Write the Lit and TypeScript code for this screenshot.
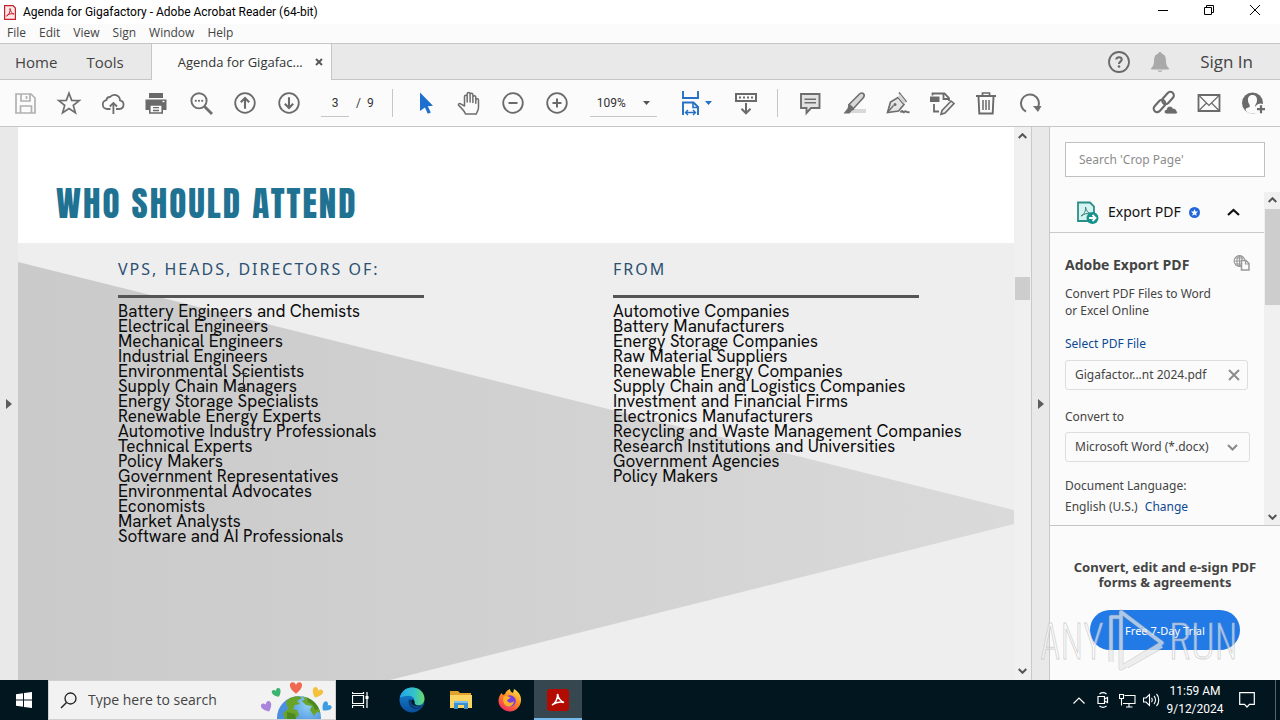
import { LitElement, html, css, svg, nothing } from "lit";
import { customElement, property } from "lit/decorators.js";

const glyphs: Record<string, unknown> = {
  save: svg`<g fill="none" stroke="#b1b1b1" stroke-width="1.7"><path d="M3 3h15l4 4v15H3z"/><path d="M8 3v7h9V3M7.500 22v-7h11v7"/><path d="M13.500 5v3"/></g>`,
  star: svg`<path fill="none" stroke="#6e6e6e" stroke-width="1.7" stroke-linejoin="miter" d="M12 2.200l2.700 7.100 7.600.3-6 4.800 2.100 7.400-6.400-4.300-6.400 4.300 2.100-7.400-6-4.800 7.600-.3z"/>`,
  cloud: svg`<g fill="none" stroke="#6e6e6e" stroke-width="1.800"><path d="M9.500 18H6a4.500 4.500 0 0 1-.6-8.900A3.500 3.500 0 0 1 9 6a5.600 5.600 0 0 1 10 3.300A4.400 4.400 0 0 1 18.500 18h-3.500"/><path d="M12.400 23V12.500M8.800 15.500l3.600-3.600 3.600 3.600"/></g>`,
  print: svg`<path fill="#6a6a6a" d="M4 2h14v5H4zM.5 8.500h21V19H18v-5H4v5H.5z"/><path fill="#fbfbfb" stroke="#6a6a6a" stroke-width="1.6" d="M4.800 14h12.400v8H4.800z"/><path d="M8 16.700h6M8 19.500h6" stroke="#6a6a6a" stroke-width="1.300"/><path d="M17.500 10.500h2" stroke="#fff" stroke-width="1.300"/>`,
  find: svg`<circle cx="10" cy="9.800" r="7.600" fill="none" stroke="#6e6e6e" stroke-width="1.900"/><path d="M15.500 15.500l7.500 7.500" stroke="#6e6e6e" stroke-width="2.800"/><g fill="#6e6e6e"><circle cx="6.800" cy="9.800" r="1.100"/><circle cx="10" cy="9.800" r="1.100"/><circle cx="13.200" cy="9.800" r="1.100"/></g>`,
  up: svg`<g fill="none" stroke="#6a6a6a" stroke-width="1.800"><circle cx="12" cy="12" r="9.800"/><path d="M12 17.800V7M7.800 11.200L12 7l4.200 4.200" stroke-width="2.100"/></g>`,
  down: svg`<g fill="none" stroke="#6a6a6a" stroke-width="1.800"><circle cx="12" cy="12" r="9.800"/><path d="M12 6.200V17M7.800 12.800L12 17l4.200-4.200" stroke-width="2.100"/></g>`,
  pointer: svg`<path fill="#1d6fd0" d="M7 1.500l13 13.200-5.200.6 3 6.200-3 1.300-2.900-6.200L7 20z"/>`,
  hand: svg`<path fill="#fbfbfb" stroke="#6e6e6e" stroke-width="1.500" stroke-linejoin="round" stroke-linecap="round" d="M8.500 23c-1-2.500-3-5-6.800-8.600-.8-.8.300-2.200 1.500-1.700L7.500 15V5.500c0-1.800 2.600-1.800 2.700 0V11 3c0-1.900 2.900-1.900 2.900 0v8V3.500c0-1.700 2.700-1.700 2.800 0V11.500 6c0-1.700 2.800-1.700 2.900 0v6.200V9c.2-1.600 2.700-1.600 2.700.2v7c0 3-1.500 4.500-2.200 6.800z"/>`,
  minus: svg`<g fill="none" stroke="#6a6a6a" stroke-width="1.800"><circle cx="12" cy="12" r="9.800"/><path d="M7.500 12h9" stroke-width="2"/></g>`,
  plus: svg`<g fill="none" stroke="#6a6a6a" stroke-width="1.800"><circle cx="12" cy="12" r="9.800"/><path d="M7.500 12h9M12 7.500v9" stroke-width="2"/></g>`,
  fit: svg`<g fill="none" stroke="#2470c4" stroke-width="1.900"><path d="M4 0v7h15V0M4 24V11.500h10.500L19 16v8"/><path d="M14 11.500V16.500h5" stroke-width="1.600"/><path d="M6.500 21.500h10M9 19l-2.500 2.500L9 24M14 19l2.500 2.500L14 24" stroke-width="1.400"/></g>`,
  ruler: svg`<path fill="#fbfbfb" stroke="#6a6a6a" stroke-width="2" d="M2 3h20v7H2z"/><path d="M5 6.500h14" stroke="#6a6a6a" stroke-width="2.200" stroke-dasharray="2 2"/><path fill="none" stroke="#6a6a6a" stroke-width="2" d="M12 12v10M7.500 17.800L12 22.300l4.500-4.500"/>`,
  comment: svg`<path fill="#e2e2e2" stroke="#6e6e6e" stroke-width="1.900" d="M3 3h18.500v14H13l-4.500 5v-5H3z"/><path d="M6.500 8.300h11.500M6.500 11.700h11.500" stroke="#6e6e6e" stroke-width="1.400"/>`,
  marker: svg`<path fill="#d8d8d8" d="M10 18h14v4H5z"/><path fill="#d8d8d8" stroke="#6e6e6e" stroke-width="1.600" d="M7 13.500L17.500 3c3-2.500 6 .5 4 3.500L11.500 17.500z"/><path fill="#6e6e6e" d="M6.500 13l6 5.500-3 1.500-2 2.500H1.500l4-5z"/>`,
  sign: svg`<g fill="none" stroke="#6e6e6e" stroke-width="1.700"><path fill="#e6e6e6" d="M1.500 21.500L4.500 11l7.500-4.500 6 7L12.500 20z"/><path d="M1.500 21.500l6-7" stroke-width="1.400"/><path d="M13 1.500l7.500 9.500" stroke-width="1.600"/><path d="M14.500 21.500c2.500-4 2.300 1.400 4-.6s1 .8 5 .2" stroke-width="2"/></g><path d="M14 3l6 8-2.500 1.500L12 6z" fill="#d4d4d4"/><circle cx="9" cy="13.500" r="1.500" fill="#6e6e6e"/>`,
  edit: svg`<path fill="#6a6a6a" d="M0 5.500h9.500V11H0z"/><g fill="none" stroke="#6a6a6a" stroke-width="1.800"><path d="M2.500 4.500V2.500h12L19 7v3M4 13v7.500h5"/><path d="M13.500 3v5H19"/><path fill="#ededed" d="M12 19.500l9-9.500 3 2.500-9 9.500-4 1.300z" stroke-width="1.600"/></g>`,
  trash: svg`<g fill="none" stroke="#6a6a6a"><path stroke-width="2" d="M2 5h20"/><path stroke-width="1.700" d="M8.500 4.500V2h7v2.500"/><path stroke-width="1.900" d="M4.500 5.500l.8 17h13.400l.8-17"/><path stroke-width="1.500" d="M9 9v10M12 9v10M15 9v10"/></g>`,
  rotate: svg`<path fill="none" stroke="#6e6e6e" stroke-width="2" d="M8 20.500A9 9 0 1 1 20 16.500"/><path fill="#6e6e6e" d="M15 15h8.500l-3.500 6z"/>`,
  link: svg`<g fill="none" stroke="#6a6a6a" stroke-width="2.100"><rect x="8" y="3.500" width="14" height="7" rx="3.500" transform="rotate(-48 15 7)"/><rect x="-.5" y="11.500" width="14" height="7" rx="3.500" transform="rotate(-48 6.500 15)"/></g><path fill="#6a6a6a" stroke="#fbfbfb" stroke-width=".8" d="M14 23c-3.500 0-3.500-4.200-.5-4.500 0-3.500 5-4.500 6.300-1.300 3 .1 3.700 1.600 3.700 2.700 2 1 .5 3.100-1 3.100z"/>`,
  mail: svg`<g fill="none" stroke="#6a6a6a" stroke-width="1.800"><path d="M1.500 4h21v16h-21z"/><path stroke-width="1.200" d="M1.500 4l8 8M22.500 4L12 14.500 9.500 12M1.500 20l8-8M22.500 20l-8-8"/></g>`,
  user: svg`<circle cx="11.500" cy="12" r="10.500" fill="#6a6a6a"/><path fill="#fbfbfb" d="M11.500 4c3.500 0 4.800 2.500 4.500 5.500-.2 2-.8 3.400-1.700 4.500v2c1.700.8 4 .8 4.200 3.200-1.500 2-4 3.300-7 3.300s-5.500-1.300-7-3.300c.2-2.400 2.500-2.400 4.200-3.200v-2c-.9-1.100-1.500-2.500-1.700-4.500C6.700 6.500 8 4 11.500 4z"/><circle cx="19.500" cy="18" r="5.500" fill="#fbfbfb"/><path d="M20 14.200v8M16 18.200h8" stroke="#6a6a6a" stroke-width="2.200"/>`,
  help: svg`<circle cx="12" cy="12" r="10" fill="none" stroke="#6a6a6a" stroke-width="1.800"/><path fill="none" stroke="#6a6a6a" stroke-width="2.100" d="M9.300 9.500c0-3 5.400-2.900 5.400.1 0 2-2.700 2.100-2.700 4.400"/><circle cx="12" cy="16.500" r="1.300" fill="#6a6a6a"/>`,
  bell: svg`<path fill="#a9a9a9" d="M12 2c1 0 1.600.6 1.600 1.500 3 .8 4.300 3.200 4.300 6.500 0 4.500 1 6.500 2.900 8v1.500H3.200V18c1.900-1.500 2.900-3.500 2.900-8 0-3.300 1.300-5.700 4.300-6.500C10.400 2.600 11 2 12 2zM9.500 20.500h5c-.5 1.800-4.500 1.800-5 0z"/>`,
};

@customElement("tool-icon")
class ToolIcon extends LitElement {
  @property() name = "";
  @property({ type: Number }) size = 24;
  static styles = css`:host { display: inline-flex; } svg { display: block; overflow: visible; }`;
  render() {
    return html`<svg width=${this.size} height=${this.size} viewBox="0 0 24 24" aria-hidden="true">${glyphs[this.name] ?? nothing}</svg>`;
  }
}

const roles = ["Battery Engineers and Chemists", "Electrical Engineers", "Mechanical Engineers", "Industrial Engineers", "Environmental Scientists", "Supply Chain Managers", "Energy Storage Specialists", "Renewable Energy Experts", "Automotive Industry Professionals", "Technical Experts", "Policy Makers", "Government Representatives", "Environmental Advocates", "Economists", "Market Analysts", "Software and AI Professionals"];
const sources = ["Automotive Companies", "Battery Manufacturers", "Energy Storage Companies", "Raw Material Suppliers", "Renewable Energy Companies", "Supply Chain and Logistics Companies", "Investment and Financial Firms", "Electronics Manufacturers", "Recycling and Waste Management Companies", "Research Institutions and Universities", "Government Agencies", "Policy Makers"];

const chevron = (d: string, color = "#555", w = 2) =>
  html`<svg width="9" height="6" viewBox="0 0 9 6" aria-hidden="true"><path d=${d} fill="none" stroke=${color} stroke-width=${w}/></svg>`;
const UP = "M.7 5L4.500 1.200 8.300 5";
const DOWN = "M.7 1L4.500 4.800 8.300 1";

@customElement("app-root")
class AppRoot extends LitElement {
  static styles = css`
    :host { display: block; height: 100vh; overflow: hidden; color: #444; font: 12px/16px "Open Sans", "Noto Sans", sans-serif; }
    * { box-sizing: border-box; }
    button, input, select { font: inherit; color: inherit; border: 0; background: none; padding: 0; margin: 0; border-radius: 0; }
    button { display: inline-flex; align-items: center; justify-content: center; }
    h1, h2, h3, p, ul { margin: 0; padding: 0; font: inherit; }
    ul { list-style: none; }
    a { color: #0d4a94; text-decoration: none; }
    svg { display: block; flex: none; }
    .app { height: 100%; display: flex; flex-direction: column; background: #fbfbfb; position: relative; }
    .grow { flex: 1; }

    .title { height: 24px; flex: none; background: #fff; color: #000; display: flex; align-items: center; font-family: Roboto, sans-serif; padding-right: 2px; }
    .title svg.logo { margin: 0 7px 0 4px; }
    .title .ctl { width: 46px; height: 24px; padding-bottom: 4px; }
    .menu { height: 19px; flex: none; display: flex; align-items: center; gap: 13px; padding: 0 0 2px 7px; }
    .tabs { height: 37px; flex: none; background: #e9e9e9; border-top: 1px solid #c6c6c6; border-bottom: 1px solid #c6c6c6; display: flex; align-items: stretch; font-size: 13px; }
    .tabs .nav { padding: 0 15px; font-size: 15px; }
    .tabs .nav + .nav { padding: 0 27px 0 14px; }
    .tab { width: 181px; background: #fbfbfb; border: solid #c6c6c6; border-width: 0 1px; margin-bottom: -1px; display: flex; align-items: center; justify-content: space-between; padding: 0 8px 0 26px; color: #333; }
    .tabs .ico { width: 41px; }
    .tabs .signin { padding: 0 27px 0 20px; font-size: 17px; }

    .tools { height: 47px; flex: none; border-bottom: 1px solid #c6c6c6; display: flex; align-items: center; padding: 0 5px 0 3px; color: #333; }
    .tools button { width: 44px; height: 40px; flex: none; }
    .tools .wide { width: 50px; }
    .tools .page { width: 28px; height: 27px; margin: 0 7px 0 10px; border-bottom: 1px solid #c6c6c6; text-align: center; font-family: Roboto, sans-serif; }
    .tools .total { font-family: Roboto, sans-serif; white-space: pre; }
    .tools i { width: 1px; height: 28px; background: #c6c6c6; margin: 0 10px 0 6px; }
    .tools i.first { margin-left: 18px; }
    .zoom { position: relative; display: flex; align-items: center; margin: 0 14px 0 11px; }
    .zoom select { appearance: none; width: 67px; height: 27px; border-bottom: 1px solid #c6c6c6; padding-left: 7px; font-family: Roboto, sans-serif; }
    .zoom svg { position: absolute; right: 7px; pointer-events: none; }
    .tools .fit { gap: 2px; }

    .main { flex: 1; min-height: 0; display: flex; background: #e9e9e9; }
    .gut { width: 18px; flex: none; display: flex; align-items: center; justify-content: center; }
    .doc { flex: 1; min-width: 0; display: flex; flex-direction: column; background: #fff; color: #0c0c0c; position: relative; }
    .doc h1 { padding: 50px 38px 12px; font: 35px/54px Anton, "Roboto Condensed", sans-serif; letter-spacing: 2px; color: #1f7292; height: 116px; flex: none; white-space: nowrap; }
    .sheet { flex: 1; min-height: 0; display: grid; background: #eee; overflow: hidden; }
    .sheet > * { grid-area: 1 / 1; min-height: 0; }
    .sheet > svg { width: 100%; height: 100%; }
    .cols { display: grid; grid-template-columns: 5fr 4fr; padding: 14px 5px 0 100px; align-items: start; }
    .cols h2 { font: 16px/24px "Noto Sans", sans-serif; letter-spacing: 2px; color: #2b5070; }
    .cols ul { margin-top: 12px; font: 17px/15px "HK Grotesk", "Hanken Grotesk", Inter, sans-serif; white-space: nowrap; }
    .cols hr { border: 0; height: 3px; width: 306px; max-width: 95%; background: #555; margin: 14px 0 -6px; }
    .ibeam { position: absolute; left: 221px; top: 246px; }
    .bar { width: 17px; flex: none; background: #f0f0f0; display: flex; flex-direction: column; align-items: center; justify-content: space-between; padding: 6px 0; position: relative; }
    .bar .thumb { position: absolute; width: 15px; height: 23px; top: 150px; background: #cdcdcd; }
    .gut.right { border: solid #c9c9c9; border-width: 0 1px; width: 19px; }

    .panel { width: 230px; flex: none; background: #fbfbfb; display: flex; flex-direction: column; font-family: "Noto Sans", sans-serif; }
    .panel .search { margin: 15px; height: 35px; border: 1px solid #c0c0c0; background: #fff; padding: 0 13px; font-size: 12px; }
    .search::placeholder { color: #8c8c8c; opacity: 1; }
    .scroll { height: 334px; flex: none; display: flex; border-bottom: 1px solid #c6c6c6; }
    .content { flex: 1; min-width: 0; }
    .exp { height: 41px; border-bottom: 1px solid #c9c9c9; display: flex; align-items: center; padding: 0 24px 0 26px; color: #111; font-size: 14px; }
    .exp span { margin: 0 8px 0 9px; }
    .body { padding: 22px 14px 0 15px; display: flex; flex-direction: column; align-items: flex-start; }
    .body .head { align-self: stretch; display: flex; justify-content: space-between; font: bold 14px/20px "Open Sans", sans-serif; }
    .body p { line-height: 17px; margin: 10px 0 17px; }
    .file { width: 183px; height: 30px; border: 1px solid #dedede; border-radius: 3px; display: flex; align-items: center; justify-content: space-between; padding: 0 7px 0 9px; margin: 8px 0 19px; white-space: nowrap; }
    .conv { position: relative; margin: 7px 0 16px; display: flex; align-items: center; }
    .conv select { appearance: none; width: 185px; height: 30px; border: 1px solid #dedede; border-radius: 3px; padding-left: 9px; }
    .conv svg { position: absolute; right: 12px; pointer-events: none; }
    .lang { margin-top: 5px; }
    .lang a { margin-left: 4px; }
    .scroll .bar { width: 16px; padding: 5px 0; }
    .scroll .thumb { top: 17px; height: 96px; }
    .promo { flex: 1; display: flex; flex-direction: column; align-items: center; padding: 34px 18px 0; text-align: center; font-size: 13px; font-weight: bold; line-height: 15px; }
    .trial { width: 150px; height: 40px; border-radius: 20px; background: #227ae6; color: #fff; font-size: 11px; font-weight: normal; margin-top: 20px; flex: none; }
    .mark { position: absolute; right: 42px; bottom: 44px; pointer-events: none; }
    .mark text { font: 200 44px Oswald, "Roboto Condensed", sans-serif; }

    .task { height: 40px; flex: none; background: #02161f; display: flex; align-items: stretch; color: #fff; }
    .task button { width: 49px; }
    .task .start { width: 48px; }
    .task .view { width: 51px; padding-right: 2px; }
    .find { width: 288px; background: #f2f2f2; border: 1px solid #d0d0d0; display: flex; align-items: center; padding-left: 11px; }
    .find input { flex: 1; min-width: 0; margin-left: 11px; font-size: 14px; color: #333; }
    .find input::placeholder { color: #444; opacity: 1; }
    .task .on { width: 48px; background: #36474f; border-bottom: 2px solid #76b9ed; padding-top: 2px; }
    .tray { display: flex; align-items: center; }
    .tray button { width: 24px; height: 40px; }
    .clock { width: 64px; text-align: center; line-height: 18px; margin-right: 4px; font-family: Roboto, sans-serif; white-space: nowrap; }
    .tray .note { width: 32px; margin-right: 12px; }
    .peek { width: 5px; align-self: stretch; border-left: 1px solid #58656b; }
  `;

  tool(name: string, label: string) {
    return html`<button aria-label=${label}><tool-icon name=${name}></tool-icon></button>`;
  }

  render() {
    const tri = (c: string) => html`<svg width="7" height="4" viewBox="0 0 7 4" aria-hidden="true"><path d="M0 0h7L3.500 4z" fill=${c}/></svg>`;
    const side = html`<svg width="6" height="10" viewBox="0 0 6 10" aria-hidden="true"><path d="M0 0l6 5-6 5z" fill="#5c5c5c"/></svg>`;
    return html`<div class="app">
      <header class="title">
        <svg class="logo" width="12" height="15" viewBox="0 0 12 15" aria-hidden="true"><path d="M.6.600h8.400l2.400 2.400v11.400H.6z" fill="#fbe9ea" stroke="#c8202a" stroke-width="1.200"/><path d="M2.500 11c2.500-1 4-4.500 3.500-7.500.8 3.500 2 5 4 5.500-2.500-.8-5.500 0-7.500 2z" fill="none" stroke="#c8202a"/></svg>
        <span>Agenda for Gigafactory - Adobe Acrobat Reader (64-bit)</span><span class="grow"></span>
        <button class="ctl" aria-label="Minimize"><svg width="10" height="10"><path d="M0 5.500h10" stroke="#000"/></svg></button>
        <button class="ctl" aria-label="Restore"><svg width="10" height="10"><path d="M.5 2.500h7v7h-7zM2.500 2.500v-2h7v7h-2" fill="none" stroke="#000"/></svg></button>
        <button class="ctl" aria-label="Close"><svg width="10" height="10"><path d="M0 0l10 10M10 0L0 10" stroke="#000"/></svg></button>
      </header>
      <nav class="menu">${["File", "Edit", "View", "Sign", "Window", "Help"].map((m) => html`<button>${m}</button>`)}</nav>
      <div class="tabs">
        <button class="nav">Home</button><button class="nav">Tools</button>
        <div class="tab"><span>Agenda for Gigafac...</span><button aria-label="Close tab"><svg width="8" height="8"><path d="M1 1l6 6M7 1L1 7" stroke="#555" stroke-width="1.800"/></svg></button></div>
        <span class="grow"></span>
        <button class="ico" aria-label="Help"><tool-icon name="help"></tool-icon></button>
        <button class="ico" aria-label="Notifications"><tool-icon name="bell"></tool-icon></button>
        <button class="signin">Sign In</button>
      </div>
      <div class="tools">
        ${this.tool("save", "Save")}${this.tool("star", "Star")}${this.tool("cloud", "Upload")}${this.tool("print", "Print")}${this.tool("find", "Find")}${this.tool("up", "Previous page")}${this.tool("down", "Next page")}
        <input class="page" aria-label="Page" value="3" /><span class="total">/  9</span><i class="first"></i>
        ${this.tool("pointer", "Select")}${this.tool("hand", "Pan")}${this.tool("minus", "Zoom out")}${this.tool("plus", "Zoom in")}
        <label class="zoom"><select aria-label="Zoom"><option>109%</option></select>${tri("#555")}</label>
        <button class="wide fit" aria-label="Fit width"><tool-icon name="fit"></tool-icon>${tri("#2470c4")}</button>
        <button class="wide" aria-label="Toolbar mode"><tool-icon name="ruler"></tool-icon></button><i></i>
        ${this.tool("comment", "Comment")}${this.tool("marker", "Highlight")}${this.tool("sign", "Sign")}${this.tool("edit", "Edit PDF")}${this.tool("trash", "Delete")}${this.tool("rotate", "Rotate")}
        <span class="grow"></span>
        ${this.tool("link", "Share link")}${this.tool("mail", "Email")}${this.tool("user", "Add people")}
      </div>
      <div class="main">
        <div class="gut">${side}</div>
        <article class="doc">
          <h1>WHO SHOULD ATTEND</h1>
          <div class="sheet">
            <svg viewBox="0 0 996 437" preserveAspectRatio="none" aria-hidden="true">
              <defs><linearGradient id="g"><stop offset="0" stop-color="#cacaca"/><stop offset=".5" stop-color="#d1d1d1"/><stop offset="1" stop-color="#dadada"/></linearGradient></defs>
              <path d="M0 19L996 267V281L372 437H0z" fill="url(#g)"/>
            </svg>
            <div class="cols">
              <section><h2>VPS, HEADS, DIRECTORS OF:</h2><hr /><ul>${roles.map((r) => html`<li>${r}</li>`)}</ul></section>
              <section><h2>FROM</h2><hr /><ul>${sources.map((r) => html`<li>${r}</li>`)}</ul></section>
            </div>
          </div>
          <svg class="ibeam" width="9" height="17" viewBox="0 0 9 17" aria-hidden="true"><path d="M1 .5h2.500l1 1 1-1H8M4.500 1.500v14M1 16.500h2.500l1-1 1 1H8" fill="none" stroke="#333"/></svg>
        </article>
        <div class="bar">${chevron(UP)}<div class="thumb"></div>${chevron(DOWN)}</div>
        <div class="gut right">${side}</div>
        <aside class="panel">
          <input class="search" aria-label="Search tools" placeholder="Search 'Crop Page'" />
          <div class="scroll">
            <div class="content">
              <div class="exp">
                <svg width="23" height="23" viewBox="0 0 23 23" aria-hidden="true"><path d="M2 1.500h12l4 4V20H2z" fill="#d5f3f0" stroke="#2b8f88" stroke-width="1.800"/><path d="M5 15c3-1.500 5-5 4.500-9 .8 4 2.500 6 5.500 6.500-3.500-.7-7 .5-10 2.500z" fill="none" stroke="#3a7f7a"/><circle cx="16.500" cy="17" r="6" fill="#17928a"/><path d="M13 17h6M16.500 14l3 3-3 3" fill="none" stroke="#fff" stroke-width="1.800"/></svg>
                <span>Export PDF</span>
                <svg width="11" height="11" viewBox="0 0 11 11" aria-hidden="true"><circle cx="5.500" cy="5.500" r="5.500" fill="#2268dc"/><path d="M5.500 2l1 2.400 2.500.2-1.900 1.700.6 2.500-2.200-1.400-2.200 1.400.6-2.500L2 4.600l2.500-.2z" fill="#fff"/></svg>
                <span class="grow"></span>
                <svg width="13" height="8" viewBox="0 0 13 8" aria-hidden="true"><path d="M1 7l5.500-5L12 7" fill="none" stroke="#111" stroke-width="2.200"/></svg>
              </div>
              <div class="body">
                <div class="head"><h3>Adobe Export PDF</h3>
                  <svg width="17" height="16" viewBox="0 0 17 16" aria-hidden="true"><g fill="none" stroke="#999" stroke-width="1.100"><circle cx="6.500" cy="6" r="5.400"/><path d="M1 6h11M6.500.500v11M2 3h9M2 9h9"/><ellipse cx="6.500" cy="6" rx="2.600" ry="5.400"/><path d="M8.500 5.500h4.500l3 3v6.500H8.500z" fill="#fbfbfb" stroke-width="1.500"/><path d="M12.500 5.500V9H16"/></g></svg>
                </div>
                <p>Convert PDF Files to Word<br />or Excel Online</p>
                <a href="#">Select PDF File</a>
                <div class="file"><span>Gigafactor...nt 2024.pdf</span><button aria-label="Remove file"><svg width="12" height="12"><path d="M1 1l10 10M11 1L1 11" stroke="#8c8c8c" stroke-width="2"/></svg></button></div>
                <label for="fmt">Convert to</label>
                <div class="conv"><select id="fmt"><option>Microsoft Word (*.docx)</option></select><svg width="11" height="7" viewBox="0 0 11 7" aria-hidden="true"><path d="M1 1l4.500 4.500L10 1" fill="none" stroke="#8a8a8a" stroke-width="2"/></svg></div>
                <span>Document Language:</span>
                <span class="lang">English (U.S.) <a href="#">Change</a></span>
              </div>
            </div>
            <div class="bar">${chevron(UP)}<div class="thumb"></div>${chevron(DOWN)}</div>
          </div>
          <div class="promo"><span>Convert, edit and e-sign PDF forms &amp; agreements</span><button class="trial">Free 7-Day Trial</button></div>
        </aside>
      </div>
      <svg class="mark" width="200" height="78" viewBox="0 -10 200 78" aria-label="ANY RUN">
        <g fill="#fff" fill-opacity=".6" stroke="#aaa" stroke-opacity=".5" stroke-width=".8"><text x="2" y="51">ANY</text><text x="131" y="51">RUN</text></g>
        <g fill="none" stroke-linejoin="round"><path d="M83 4v56L124 35zM83 9H73V54M89 58L124 38" stroke="#999" stroke-opacity=".35" stroke-width="5"/><path d="M83 4v56L124 35zM83 9H73V54M89 58L124 38" stroke="#fff" stroke-opacity=".55" stroke-width="3.500"/></g>
      </svg>
      <footer class="task">
        <button class="start" aria-label="Start"><svg width="16" height="16" viewBox="0 0 16 16"><path fill="#fff" d="M0 2.200l7-1v6.300H0zM8 1l8-1v7.500H8zM0 8.500h7v6.300l-7-1zM8 8.500h8V16l-8-1z"/></svg></button>
        <label class="find">
          <svg width="17" height="17" viewBox="0 0 17 17"><circle cx="10.500" cy="6.500" r="5.500" fill="none" stroke="#222" stroke-width="1.300"/><path d="M6.500 10.500L1 16" stroke="#222" stroke-width="1.400"/></svg>
          <input aria-label="Search" placeholder="Type here to search" />
          <svg width="74" height="38" viewBox="0 0 74 38" aria-hidden="true">
            <defs><clipPath id="gl"><circle cx="38" cy="37" r="22"/></clipPath><path id="ht" d="M0 5C-7 0-6-5-3-5-1-5 0-3 0-2.500 0-3 1-5 3-5 6-5 7 0 0 5z"/><radialGradient id="sea" cx=".7" cy=".2"><stop offset="0" stop-color="#8fd0f4"/><stop offset="1" stop-color="#4a8fe0"/></radialGradient></defs>
            <circle cx="38" cy="37" r="22" fill="url(#sea)"/>
            <g clip-path="url(#gl)"><g transform="translate(2 0)"><path fill="#6aa329" d="M23 21c4-7 12-7 16-4l-5 3 3 3-5 1-2 4 4 1 2 5-4 4H22l-2-6 5-4zM39 15c10 0 17 8 19 17l-4-1-3 4-4-6 2-4-6-1-4-4 3-2z"/><path fill="#4b8a22" d="M44 16c6 1 10 6 12 12l-4 1-2-5-5-3zM24 31l8 2 1 5H24z"/></g></g>
            <use href="#ht" transform="translate(35 7) scale(1.150)" fill="#ef6950"/><use href="#ht" transform="translate(16 12) rotate(-25) scale(.85)" fill="#3cb371"/><use href="#ht" transform="translate(56 12) rotate(25) scale(1)" fill="#f4c13d"/><use href="#ht" transform="translate(6 26) rotate(-25) scale(1)" fill="#a884dc"/><use href="#ht" transform="translate(65 26) rotate(45) scale(.9)" fill="#3d9de0"/>
          </svg>
        </label>
        <button class="view" aria-label="Task view"><svg width="17" height="16" viewBox="0 0 17 16"><path d="M.5 3.500h11v8H.5zM.5 0v1.500h11V0M.5 16v-2.500h11V16M15 0v16" fill="none" stroke="#fff" stroke-width="1.200"/><path d="M13.500 4h3v3h-3z" fill="#fff"/></svg></button>
        <button aria-label="Edge"><svg width="26" height="26" viewBox="0 0 24 24"><defs><linearGradient id="e1" x1="0" x2="1"><stop offset="0" stop-color="#22a6e8"/><stop offset=".6" stop-color="#35c3c8"/><stop offset="1" stop-color="#6bdc64"/></linearGradient><linearGradient id="e2" y1="0" y2="1" x2="0"><stop offset="0" stop-color="#1789d8"/><stop offset="1" stop-color="#0b4f9c"/></linearGradient></defs><circle cx="12" cy="12" r="11.500" fill="url(#e2)"/><path fill="url(#e1)" d="M.8 10C2 4 6.500.500 12 .500c6.500 0 11.500 4.500 11.500 10 0 4-3 6.500-6.500 6.500-3 0-4.500-1.200-3.500-3 2-3-1-6-4.500-6C5.500 8 2 9 .8 10z"/><path fill="#073f7b" d="M9 12c-1 5 3 9.500 8.500 8.500 2-.4 3.500-1.200 4.300-2.500C17 20.500 12 18 12 13.500c0-1.500-2-3-3-1.500z"/><path fill="#02161f" d="M14.500 13.500c-1.200-2.800-3-2.500-3-.3 0 2.700 3 5 7 4.800 1.500 0 3-.4 4.500-1-2 .3-9.500 1-8.500-3.500z"/></svg></button>
        <button aria-label="File Explorer"><svg width="22" height="20" viewBox="0 0 22 20"><path fill="#e2a32d" d="M0 1h8l2 2h11v5H0z"/><path fill="#fcd462" d="M0 5h22v13H0z"/><path fill="#3a8fd0" d="M4 11h14v8h-4v-4H8v4H4z"/><path fill="#7cc0ef" d="M4 11h14v2H4z"/></svg></button>
        <button aria-label="Firefox"><svg width="24" height="24" viewBox="0 0 24 24"><defs><linearGradient id="f" x1=".8" y1="0" x2=".2" y2="1"><stop offset="0" stop-color="#ffe14a"/><stop offset=".45" stop-color="#ff8a1f"/><stop offset="1" stop-color="#f0206a"/></linearGradient></defs><path fill="url(#f)" d="M3.500 5L5 7l2-1c1-3 3-4 5-5 0 2 1 3 3 4l1-4c5 3 7.500 7 7 12-.7 6-5.500 10.500-11 10.500S.5 19 .5 13C.5 10 1.500 7 3.500 5z"/><circle cx="12" cy="13" r="5.800" fill="#7a3fe0"/><path fill="#ffb02a" d="M5.500 9c3-2 5 0 7 .3-.5 1.700-3 1.700-3.500 3 1 3 5 3 7 .7-.5 4-3.500 6-6 5.500-4-.8-5.500-5-4.500-9.500z"/></svg></button>
        <button class="on" aria-label="Adobe Acrobat"><svg width="22" height="22" viewBox="0 0 22 22"><rect width="22" height="22" rx="3" fill="#b30b00"/><path fill="none" stroke="#fff" stroke-width="1.500" d="M5 16c3-1.500 6-6 5.500-11 1 4.500 3.500 7.500 6.500 8.500-4-1-9 .5-12 2.500z"/></svg></button>
        <span class="grow"></span>
        <div class="tray">
          <button aria-label="Show hidden icons"><svg width="12" height="7"><path d="M.5 6.500L6 1l5.500 5.500" fill="none" stroke="#fff" stroke-width="1.200"/></svg></button>
          <button aria-label="Camera"><svg width="12" height="16" viewBox="0 0 12 16"><path d="M1 4.500h6.500v7H1zM7.500 7l3-1.500v5l-3-1.500M2.500 2c2-1.500 5-1.500 7 0M2.500 14c2 1.500 5 1.500 7 0" fill="none" stroke="#fff" stroke-width="1.200"/></svg></button>
          <button aria-label="Network"><svg width="17" height="15" viewBox="0 0 17 15"><path d="M5.500 2.500h10.500v8H4M10 10.500v3.500M7 14h6.500M.5 1.500h4v4h-4zM2.500 5.500v7" fill="none" stroke="#fff" stroke-width="1.100"/></svg></button>
          <button aria-label="Volume"><svg width="17" height="14" viewBox="0 0 17 14"><path d="M.5 5h2.500l3.500-3.500v11L3 9H.500zM8.500 5c1 1 1 3 0 4M11 3c2 2 2 6 0 8M13.500 1c3 3 3 9 0 12" fill="none" stroke="#fff" stroke-width="1.100"/></svg></button>
          <div class="clock">11:59 AM<br />9/12/2024</div>
          <button class="note" aria-label="Action center"><svg width="16" height="16" viewBox="0 0 16 16"><path d="M.7.700h14.600v11.600H10.500L8 15l-2.500-2.700H.7z" fill="none" stroke="#fff" stroke-width="1.200"/></svg></button>
          <span class="peek"></span>
        </div>
      </footer>
    </div>`;
  }
}
